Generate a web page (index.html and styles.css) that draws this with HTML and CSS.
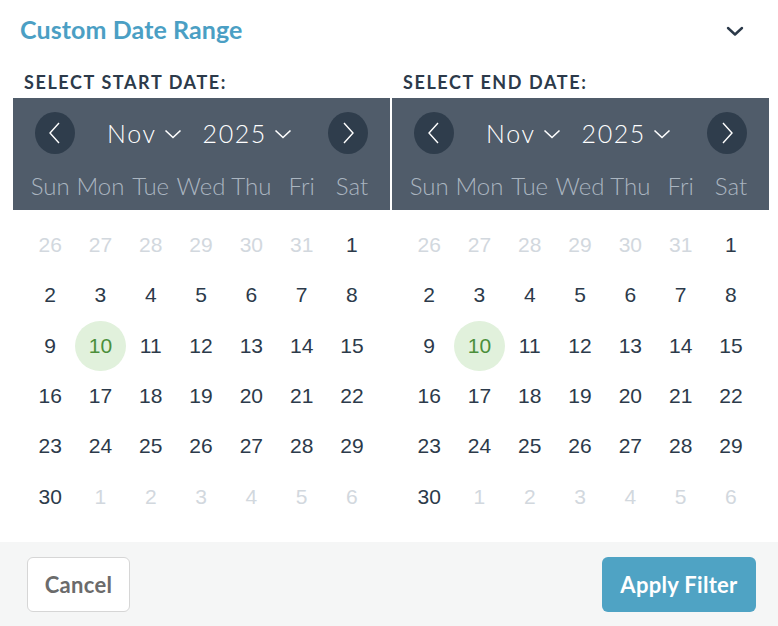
FILE: index.html
```html
<!DOCTYPE html>
<html lang="en">
<head>
    <meta charset="UTF-8">
    <meta name="viewport" content="width=device-width, initial-scale=1.0">
    <title>Custom Date Range</title>
    <link rel="stylesheet" href="styles.css">
</head>
<body>
    <div class="panel">
        <div class="top">
            <span class="title">Custom Date Range</span>
            <svg class="toggle" width="18" height="12" viewBox="0 0 18 12"><path d="M2 3 L9 9.5 L16 3" fill="none" stroke="#2b3949" stroke-width="2.4" stroke-linecap="round" stroke-linejoin="round"/></svg>
        </div>
        <div class="cals">
            <div class="cal">
                <div class="label">SELECT START DATE:</div>
                <div class="head">
                    <div class="nav">
                        <a class="arrow" href="javascript:;"><svg width="14" height="24" viewBox="0 0 14 24"><path d="M11 2 L2 12 L11 22" fill="none" stroke="#fff" stroke-width="1.4"/></svg></a>
                        <div class="pick">
                            <span>Nov</span><svg class="dd" width="18" height="10" viewBox="0 0 18 10"><path d="M1.5 1.5 L9 8.5 L16.5 1.5" fill="none" stroke="#fff" stroke-width="1.6"/></svg>
                            <span class="yr">2025</span><svg class="dd" width="18" height="10" viewBox="0 0 18 10"><path d="M1.5 1.5 L9 8.5 L16.5 1.5" fill="none" stroke="#fff" stroke-width="1.6"/></svg>
                        </div>
                        <a class="arrow" href="javascript:;"><svg width="14" height="24" viewBox="0 0 14 24"><path d="M3 2 L12 12 L3 22" fill="none" stroke="#fff" stroke-width="1.4"/></svg></a>
                    </div>
                    <div class="week">
                        <span>Sun</span><span>Mon</span><span>Tue</span><span>Wed</span><span>Thu</span><span>Fri</span><span>Sat</span>
                    </div>
                </div>
                <div class="days">
                    <span class="off">26</span><span class="off">27</span><span class="off">28</span><span class="off">29</span><span class="off">30</span><span class="off">31</span><span>1</span>
                    <span>2</span><span>3</span><span>4</span><span>5</span><span>6</span><span>7</span><span>8</span>
                    <span>9</span><span class="today">10</span><span>11</span><span>12</span><span>13</span><span>14</span><span>15</span>
                    <span>16</span><span>17</span><span>18</span><span>19</span><span>20</span><span>21</span><span>22</span>
                    <span>23</span><span>24</span><span>25</span><span>26</span><span>27</span><span>28</span><span>29</span>
                    <span>30</span><span class="off">1</span><span class="off">2</span><span class="off">3</span><span class="off">4</span><span class="off">5</span><span class="off">6</span>
                </div>
            </div>
            <div class="cal">
                <div class="label">SELECT END DATE:</div>
                <div class="head">
                    <div class="nav">
                        <a class="arrow" href="javascript:;"><svg width="14" height="24" viewBox="0 0 14 24"><path d="M11 2 L2 12 L11 22" fill="none" stroke="#fff" stroke-width="1.4"/></svg></a>
                        <div class="pick">
                            <span>Nov</span><svg class="dd" width="18" height="10" viewBox="0 0 18 10"><path d="M1.5 1.5 L9 8.5 L16.5 1.5" fill="none" stroke="#fff" stroke-width="1.6"/></svg>
                            <span class="yr">2025</span><svg class="dd" width="18" height="10" viewBox="0 0 18 10"><path d="M1.5 1.5 L9 8.5 L16.5 1.5" fill="none" stroke="#fff" stroke-width="1.6"/></svg>
                        </div>
                        <a class="arrow" href="javascript:;"><svg width="14" height="24" viewBox="0 0 14 24"><path d="M3 2 L12 12 L3 22" fill="none" stroke="#fff" stroke-width="1.4"/></svg></a>
                    </div>
                    <div class="week">
                        <span>Sun</span><span>Mon</span><span>Tue</span><span>Wed</span><span>Thu</span><span>Fri</span><span>Sat</span>
                    </div>
                </div>
                <div class="days">
                    <span class="off">26</span><span class="off">27</span><span class="off">28</span><span class="off">29</span><span class="off">30</span><span class="off">31</span><span>1</span>
                    <span>2</span><span>3</span><span>4</span><span>5</span><span>6</span><span>7</span><span>8</span>
                    <span>9</span><span class="today">10</span><span>11</span><span>12</span><span>13</span><span>14</span><span>15</span>
                    <span>16</span><span>17</span><span>18</span><span>19</span><span>20</span><span>21</span><span>22</span>
                    <span>23</span><span>24</span><span>25</span><span>26</span><span>27</span><span>28</span><span>29</span>
                    <span>30</span><span class="off">1</span><span class="off">2</span><span class="off">3</span><span class="off">4</span><span class="off">5</span><span class="off">6</span>
                </div>
            </div>
        </div>
        <div class="foot">
            <button class="btn cancel">Cancel</button>
            <button class="btn apply">Apply Filter</button>
        </div>
    </div>
</body>
</html>
```

FILE: styles.css
```css
*{
    box-sizing: border-box;
}
body{
    margin: 0;
    background: #fff;
    font-family: "Lato", "Liberation Sans", sans-serif;
}
.panel{
    width: 778px;
    height: 626px;
    display: flex;
    flex-direction: column;
}
.top{
    height: 60px;
    padding: 0 34px 0 20px;
    display: flex;
    align-items: center;
    justify-content: space-between;
}
.title{
    font-size: 25px;
    font-weight: 700;
    color: #4b9fc4;
    letter-spacing: 0.1px;
    margin-top: -2px;
}
.toggle{
    margin-top: 2px;
}
.cals{
    display: flex;
    gap: 2px;
    padding-left: 13px;
}
.cal{
    width: 377px;
}
.label{
    height: 38px;
    padding: 11px 0 0 11px;
    font-size: 18px;
    font-weight: 700;
    letter-spacing: 1.6px;
    color: #2c3a4a;
}
.head{
    height: 112px;
    background: #505c6a;
    padding: 14px 22px 0;
}
.nav{
    display: flex;
    align-items: center;
    justify-content: space-between;
    height: 42px;
}
.arrow{
    width: 40px;
    height: 42px;
    border-radius: 50%;
    background: #2f3d4c;
    display: flex;
    align-items: center;
    justify-content: center;
}
.pick{
    display: flex;
    align-items: center;
    color: #fff;
    font-size: 25px;
    font-weight: 300;
    letter-spacing: 1.6px;
    margin-left: -4px;
}
.dd{
    margin-left: 7px;
    margin-top: 1px;
}
.yr{
    margin-left: 21px;
}
.week{
    display: grid;
    grid-template-columns: repeat(7, 50.3px);
    margin: 17px 0 0 -10px;
    color: #aab5c0;
    font-size: 24px;
    font-weight: 300;
    text-align: center;
    white-space: nowrap;
}
.days{
    display: grid;
    grid-template-columns: repeat(7, 50.3px);
    grid-auto-rows: 50.3px;
    margin: 10px 0 0 12px;
    font-family: "Liberation Sans", sans-serif;
    font-size: 21px;
    color: #2c3a4a;
}
.days span{
    display: flex;
    align-items: center;
    justify-content: center;
}
.days .off{
    color: #d2d8de;
}
.days .today{
    background: #e1f1dc;
    color: #4b8f3a;
    border-radius: 50%;
}
.foot{
    margin-top: auto;
    height: 84px;
    background: #f5f6f6;
    display: flex;
    justify-content: space-between;
    align-items: flex-start;
    padding: 15px 22px 0 27px;
}
.btn{
    height: 55px;
    border-radius: 6px;
    font-family: "Lato", "Liberation Sans", sans-serif;
    font-size: 22px;
    font-weight: 700;
    letter-spacing: 0.3px;
}
.cancel{
    width: 103px;
    background: #fff;
    border: 1px solid #d6d6d6;
    color: #6b6b6b;
}
.apply{
    width: 154px;
    background: #4fa3c4;
    border: none;
    color: #fff;
}
```
